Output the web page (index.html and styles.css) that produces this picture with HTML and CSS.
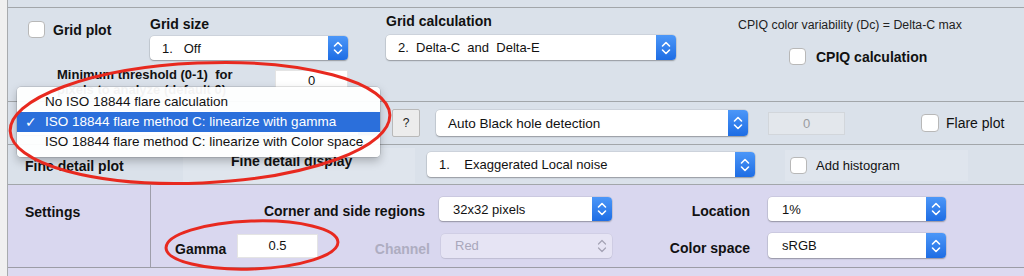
FILE: index.html
```html
<!DOCTYPE html>
<html>
<head>
<meta charset="utf-8">
<link rel="stylesheet" href="styles.css">
</head>
<body>
<div class="app">
  <div class="topstrip"></div>

  <section class="sec grid-sec">
    <div class="row1">
      <label class="chk gplot"><span class="box"></span><b>Grid plot</b></label>
      <div class="field gsize">
        <div class="lbl">Grid size</div>
        <div class="select s-gsize"><span class="val">1.   Off</span><span class="step"><svg viewBox="0 0 20 24"><path d="M6.5 10 L10 6.5 L13.5 10 M6.5 14 L10 17.5 L13.5 14"/></svg></span></div>
      </div>
      <div class="field gcalc">
        <div class="lbl">Grid calculation</div>
        <div class="select s-gcalc"><span class="val">2.  Delta-C  and  Delta-E</span><span class="step"><svg viewBox="0 0 20 24"><path d="M6.5 10 L10 6.5 L13.5 10 M6.5 14 L10 17.5 L13.5 14"/></svg></span></div>
      </div>
      <div class="cpiq">
        <div class="note">CPIQ color variability (Dc) = Delta-C max</div>
        <label class="chk cpiq-chk"><span class="box"></span><b>CPIQ calculation</b></label>
      </div>
    </div>
    <div class="row2">
      <div class="minlbl">Minimum threshold (0-1)  for<br>pixels to analyze (default 0)</div>
      <div class="input in-min">0</div>
    </div>
  </section>

  <section class="sec flare-sec">
    <div class="select s-flare"><span class="val"></span><span class="step"><svg viewBox="0 0 20 24"><path d="M6.5 10 L10 6.5 L13.5 10 M6.5 14 L10 17.5 L13.5 14"/></svg></span></div>
    <button class="help">?</button>
    <div class="select s-auto"><span class="val">Auto Black hole detection</span><span class="step"><svg viewBox="0 0 20 24"><path d="M6.5 10 L10 6.5 L13.5 10 M6.5 14 L10 17.5 L13.5 14"/></svg></span></div>
    <div class="input disabled in-bh">0</div>
    <label class="chk flare-chk"><span class="box"></span><span class="reg">Flare plot</span></label>
  </section>

  <section class="sec fine-sec">
    <div class="fplot">Fine detail plot</div>
    <div class="fbox">Fine detail display</div>
    <div class="select s-fine"><span class="val">1.    Exaggerated Local noise</span><span class="step"><svg viewBox="0 0 20 24"><path d="M6.5 10 L10 6.5 L13.5 10 M6.5 14 L10 17.5 L13.5 14"/></svg></span></div>
    <div class="hbox"><label class="chk"><span class="box"></span><span class="reg small">Add histogram</span></label></div>
  </section>

  <section class="sec settings">
    <div class="set-left">Settings</div>
    <div class="set-right">
      <div class="srow">
        <div class="slbl w-corner">Corner and side regions</div>
        <div class="select s-corner"><span class="val">32x32 pixels</span><span class="step"><svg viewBox="0 0 20 24"><path d="M6.5 10 L10 6.5 L13.5 10 M6.5 14 L10 17.5 L13.5 14"/></svg></span></div>
        <div class="slbl w-loc">Location</div>
        <div class="select s-loc"><span class="val">1%</span><span class="step"><svg viewBox="0 0 20 24"><path d="M6.5 10 L10 6.5 L13.5 10 M6.5 14 L10 17.5 L13.5 14"/></svg></span></div>
      </div>
      <div class="srow srow2">
        <div class="slbl w-gamma">Gamma</div>
        <div class="input in-gamma">0.5</div>
        <div class="slbl w-chan dim">Channel</div>
        <div class="select dis s-red"><span class="val">Red</span><span class="step"><svg viewBox="0 0 20 24"><path d="M6.5 10 L10 6.5 L13.5 10 M6.5 14 L10 17.5 L13.5 14"/></svg></span></div>
        <div class="slbl w-loc">Color space</div>
        <div class="select s-loc"><span class="val">sRGB</span><span class="step"><svg viewBox="0 0 20 24"><path d="M6.5 10 L10 6.5 L13.5 10 M6.5 14 L10 17.5 L13.5 14"/></svg></span></div>
      </div>
    </div>
  </section>
  <div class="bottom"></div>
</div>

<div class="menu">
  <div class="mi">No ISO 18844 flare calculation</div>
  <div class="mi sel"><span class="tick">✓</span>ISO 18844 flare method C: linearize with gamma</div>
  <div class="mi">ISO 18844 flare method C: linearize with Color space</div>
</div>

<svg class="marks" viewBox="0 0 1024 276" width="1024" height="276">
  <ellipse cx="200" cy="123" rx="190" ry="60" transform="rotate(-2.5 200 123)"/>
  <ellipse cx="252" cy="245" rx="86" ry="24" transform="rotate(-2 252 245)"/>
</svg>
</body>
</html>
```

FILE: styles.css
```css
* { box-sizing: border-box; margin: 0; padding: 0; }
html, body { width: 1024px; height: 276px; overflow: hidden; }
body {
  background: #f0f0f0;
  font-family: "Liberation Sans", Arial, Helvetica, sans-serif;
  color: #111;
  position: relative;
}
b { font-weight: bold; }

.app {
  margin-left: 7px;
  border-left: 1px solid #a8abae;
  height: 276px;
  background: #dae1ea;
}
.topstrip { height: 8px; border-bottom: 1px solid #a2a6aa; }
.sec { border-bottom: 1px solid #a2a6aa; }

/* generic controls */
.chk { display: flex; align-items: center; }
.box {
  width: 17px; height: 17px;
  background: #fff;
  border: 1px solid #b8b8b8;
  border-radius: 4px;
  flex: none;
}
.chk b { font-size: 14px; }
.reg { font-size: 14px; color: #111; }
.reg.small { font-size: 13px; }

.select {
  position: relative;
  display: flex;
  align-items: center;
  background: #fff;
  border-radius: 4px;
  box-shadow: 0 0 0 0.5px rgba(0,0,0,0.12), 0 1px 1.5px rgba(0,0,0,0.28);
  font-size: 13px;
  white-space: pre;
  flex: none;
}
.select .val { padding-left: 12px; flex: 1; }
.step {
  width: 20px; height: 100%;
  border-radius: 0 4px 4px 0;
  background: linear-gradient(#4c97f8, #1e6de4);
  display: flex; align-items: center; justify-content: center;
}
.step svg { width: 20px; height: 24px; }
.step path { fill: none; stroke: #fff; stroke-width: 1.6; stroke-linecap: round; stroke-linejoin: round; }
.select.dis { background: #e6e4f4; box-shadow: 0 0 0 0.5px rgba(0,0,0,0.08), 0 1px 1px rgba(0,0,0,0.08); color: #a9a7bb; }
.select.dis .step { background: none; }
.select.dis .step path { stroke: #a4a2b4; stroke-width: 1.2; }

.input {
  background: #fff;
  font-size: 13px;
  display: flex; align-items: center; justify-content: center;
  border: 1px solid #e4e4e4;
  flex: none;
}

/* grid section */
.grid-sec { height: 94px; padding: 5px 0 0 20px; overflow: hidden; }
.row1 { display: flex; align-items: flex-start; height: 55px; }
.gplot { width: 122px; margin-top: 8px; gap: 8px; }
.lbl { font-size: 14px; font-weight: bold; line-height: 17px; }
.gsize { width: 198px; margin-top: 3px; }
.gsize .select { margin-top: 3px; height: 24px; }
.gcalc { width: 290px; margin-left: 38px; }
.gcalc .select { margin-top: 5px; height: 25px; }
.cpiq { margin-left: 62px; }
.note { font-size: 12.3px; line-height: 14px; margin-top: 5px; color: #222; }
.cpiq-chk { margin-top: 16px; margin-left: 51px; gap: 10px; }
.row2 { display: flex; align-items: flex-start; padding-left: 29px; }
.minlbl { width: 218px; font-size: 13px; font-weight: bold; line-height: 15px; margin-top: -1px; white-space: pre; }
.in-min { width: 73px; height: 20px; margin-top: 2px; }

/* flare section */
.flare-sec { height: 43px; display: flex; align-items: center; padding-left: 10px; }
.s-flare { width: 360px; height: 24px; }
.help {
  margin-left: 14px;
  width: 28px; height: 28px;
  background: #ececec;
  border: 1px solid #b9b9b9;
  border-radius: 2px;
  font-family: inherit;
  font-size: 12px;
  color: #222;
}
.s-auto { width: 312px; height: 26px; margin-left: 16px; font-size: 13.5px; }
.in-bh { width: 77px; height: 23px; margin-left: 20px; }
.input.disabled { background: #e3e7ec; border: 1px solid #d2d6db; color: #9a9ca0; }
.flare-chk { margin-left: 76px; gap: 7px; }
.flare-chk .box { width: 18px; height: 18px; }

/* fine section */
.fine-sec { height: 40px; display: flex; align-items: flex-start; padding-left: 17px; }
.fplot { width: 158px; margin-top: 13px; font-size: 14px; font-weight: bold; line-height: 17px; }
.fbox {
  width: 232px; height: 35px; margin-top: 3px;
  padding: 5px 0 0 48px;
  background: #dfe5ed;
  font-size: 14px; font-weight: bold; line-height: 17px;
}
.s-fine { width: 328px; height: 25px; margin-left: 12px; margin-top: 7px; }
.hbox {
  width: 183px; height: 31px; margin-left: 30px; margin-top: 5px;
  padding-left: 5px;
  background: #dfe5ed;
  display: flex; align-items: center;
}
.hbox .chk { gap: 9px; }

/* settings */
.settings { height: 83px; display: flex; background: #d9d7ef; border-bottom-color: #9c9ca6; }
.set-left {
  width: 143px;
  border-right: 1px solid #9e9eaa;
  padding: 19px 0 0 17px;
  font-size: 14px; font-weight: bold; line-height: 17px;
}
.set-right { padding-top: 12px; }
.srow { display: flex; align-items: center; height: 24px; }
.srow2 { margin-top: 12px; height: 25px; padding-left: 24px; }
.slbl { font-size: 14px; font-weight: bold; flex: none; padding-top: 4px; }
.w-corner { width: 274px; text-align: right; }
.w-loc { width: 138px; text-align: right; }
.w-gamma { width: 62px; padding-top: 6px; }
.w-chan { width: 112px; text-align: right; padding-top: 6px; }
.dim { color: #aeadc1; }
.s-corner { width: 173px; height: 24px; margin-left: 14px; }
.s-corner .val { padding-left: 14px; }
.s-loc { width: 178px; height: 24px; margin-left: 18px; }
.s-loc .val { padding-left: 14px; }
.srow2 .s-loc { height: 25px; }
.in-gamma { width: 81px; height: 24px; }
.s-red { width: 171px; height: 24px; margin-left: 11px; }
.s-red .val { padding-left: 14px; }

.bottom { height: 8px; background: #dcdaf0; }

/* popup menu */
.menu {
  position: absolute;
  left: 17px; top: 87px;
  width: 363px; height: 70px;
  padding: 5px 0;
  background: rgba(255,255,255,0.95);
  border-radius: 4px;
  box-shadow: 0 0 0 0.5px rgba(0,0,0,0.2), 0 4px 10px rgba(0,0,0,0.25);
}
.mi {
  position: relative;
  height: 20px; line-height: 20px;
  padding-left: 28px;
  font-size: 13.5px;
  color: #111;
  white-space: nowrap;
}
.mi.sel { background: #2b6fdb; color: #fff; }
.tick { position: absolute; left: 8px; top: 0; font-size: 14px; }

/* annotation ellipses */
.marks { position: absolute; left: 0; top: 0; pointer-events: none; }
.marks ellipse { fill: none; stroke: #e8291f; stroke-width: 3; }
```
